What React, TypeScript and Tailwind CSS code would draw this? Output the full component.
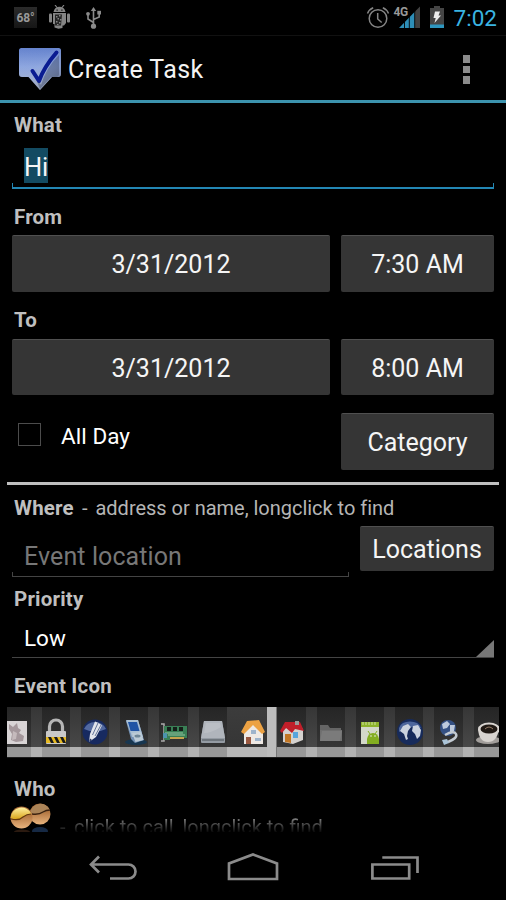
import type { ReactNode } from "react";

function StatusBar() {
  return (
    <div className="flex h-9 items-start justify-between border-b border-[#111] text-[#8a8a8a]">
      <div className="flex pt-[5px] pl-[14px]">
        <div className="mt-[2px] flex h-[21px] w-[23px] items-center justify-center bg-linear-to-b from-[#2b2b2b] to-[#161616] text-[12px] font-bold tracking-[-0.200px] text-[#999]">
          68°
        </div>
        <svg className="ml-3 h-6 w-[21px]" viewBox="0 0 21 24" fill="#858585">
          <path d="M6 0l2 2.5M15 0l-2 2.5" stroke="#858585" strokeWidth="1.2" />
          <path d="M4.500 7C5 3.500 7.500 1.800 10.500 1.800S16 3.500 16.500 7z" />
          <rect x="0" y="8.500" width="3" height="9" rx="1" />
          <rect x="18" y="8.500" width="3" height="9" rx="1" />
          <path d="M4 8h13v10l-2 2.500h-1.500V23l-4 .8-4-1.300V19H4z" />
          <path d="M6 9.500h7l-1 11H6z" fill="#262626" />
          <path d="M7 11h1.500v1.500H7zM10 10h1.500v1.500H10zM8.500 13H10v1.500H8.500zM11 14h1.500v1.500H11zM7 16h1.500v1.500H7zM10 17h1.500v1.500H10zM8 19h1.500v1H8z" />
          <path d="M7.500 4.500h1.200v1.200H7.500zM12.300 4.500h1.200v1.200h-1.200z" fill="#111" />
        </svg>
        <svg className="mt-[2px] ml-4 h-[22px] w-[15px]" viewBox="0 0 15 22" fill="none" stroke="#8a8a8a" strokeWidth="1.600">
          <path d="M7.500 2v17M7.500 15.500L2 12V7M7.500 12.500L13.200 10V6" />
          <path d="M4.800 4L7.500 0l2.700 4z" fill="#8a8a8a" stroke="none" />
          <circle cx="7.500" cy="19.200" r="2.600" fill="#8a8a8a" stroke="none" />
          <circle cx="2" cy="6.800" r="1.900" fill="#8a8a8a" stroke="none" />
          <path d="M11.300 3.800H15v3.700h-3.700z" fill="#8a8a8a" stroke="none" />
        </svg>
      </div>
      <div className="flex pt-[6px] pr-[9px]">
        <svg className="h-[23px] w-6" viewBox="0 0 24 23" fill="none" stroke="#858585" strokeWidth="1.500">
          <circle cx="12" cy="12.500" r="8.800" />
          <path d="M11.700 7v6l4 3.500" />
          <path d="M1.500 7.500Q3 3.500 7.200 1.800M22.500 7.500Q21 3.500 16.800 1.800" />
        </svg>
        <div className="relative ml-[3px] h-[23px] w-[28px]">
          <svg className="h-[23px] w-[28px]" viewBox="0 0 28 23">
            <path d="M6 22L22 5.500V22z" fill="#2e8fb8" />
            <path d="M22 5.500L27 0.500V22h-5z" fill="#424242" />
            <path d="M11.500 14v8M16.300 9v13M21.700 4v18" stroke="#000" strokeWidth="0.900" />
          </svg>
          <span className="absolute top-0 left-[1px] text-[12px] leading-[13px] font-bold tracking-[-0.500px] text-[#999]">4G</span>
        </div>
        <svg className="ml-[9px] h-[23px] w-[14px]" viewBox="0 0 14 23">
          <path d="M4 0h6v2h4v20H0V2h4z" fill="#454545" />
          <path d="M0 18.500h14V22H0z" fill="#2e96bf" />
          <path d="M5 5.500h5L8.500 9.500H11L4.500 17l1.200-5H3.500z" fill="#eee" />
        </svg>
        <span className="ml-[10px] pt-[1px] text-[22.500px] leading-[23px] text-[#3ab4e2]">7:02</span>
      </div>
    </div>
  );
}

function ActionBar() {
  return (
    <div className="flex h-[67px] items-start border-b-[3px] border-[#3c93ae] pl-[19px]">
      <svg className="mt-3 h-[43px] w-[42px]" viewBox="0 0 42 43">
        <defs>
          <linearGradient id="bubble" x1="0" y1="0" x2="0" y2="1">
            <stop offset="0" stopColor="#5878c8" />
            <stop offset="0.450" stopColor="#86a0dc" />
            <stop offset="1" stopColor="#a9b2c6" />
          </linearGradient>
          <linearGradient id="gloss" x1="0" y1="0" x2="1" y2="1">
            <stop offset="0.400" stopColor="#d9e4ff" stopOpacity="0.100" />
            <stop offset="1" stopColor="#333c55" stopOpacity="0.650" />
          </linearGradient>
        </defs>
        <path d="M2.500 0h37q2.500 0 2.500 2.500v23.500q0 3-3 3h-6L21 42 9.500 29H3q-3 0-3-3V2.500Q0 0 2.500 0z" fill="url(#bubble)" />
        <path d="M2.500 0h37q2.500 0 2.500 2.500v23.500q0 3-3 3h-6L21 42 9.500 29H3q-3 0-3-3V2.500Q0 0 2.500 0z" fill="url(#gloss)" />
        <path d="M15 26l7 11q5-17 18-30v19q0 3-3 3h-5L21 41z" fill="#26304d" opacity="0.350" />
        <path d="M13.500 23l6.500 10Q25 19 37.500 4.500" fill="none" stroke="#0a1c91" strokeWidth="4" strokeLinecap="round" strokeLinejoin="round" />
      </svg>
      <h1 className="ml-[7px] pt-[14px] text-[25px] leading-10 tracking-[0.400px] text-[#f3f3f3]">Create Task</h1>
      <div className="mt-[19px] mr-[36px] ml-auto flex flex-col gap-[3px]">
        <i className="h-[7.500px] w-[7.500px] bg-[#8b8b8b]" />
        <i className="h-[7.500px] w-[7.500px] bg-[#8b8b8b]" />
        <i className="h-[7.500px] w-[7.500px] bg-[#8b8b8b]" />
      </div>
    </div>
  );
}

function Label({ children, className }: { children: ReactNode; className: string }) {
  return <div className={"pl-[14px] text-[20.500px] font-bold tracking-[0.200px] text-[#bfbfbf] " + className}>{children}</div>;
}

function Button({ children, className }: { children: ReactNode; className: string }) {
  return (
    <button className={"rounded-[2px] border-t border-[#505050] bg-[#353535] pt-[2px] text-[25px] text-[#f5f5f5] " + className}>
      {children}
    </button>
  );
}

const eventIcons: ReactNode[] = [
  <>
    <rect x="2" y="3" width="20" height="23" fill="#d8d4d5" />
    <path d="M4 6l4 3 4-4 1 5 3 2-2 3 5 3-1 5-7 1-5-2 1-6-3-5z" fill="#a4979b" />
    <path d="M8 13l4 2-1 6-4 1z" fill="#c5babc" />
  </>,
  <>
    <path d="M5.500 14V8.500a6.500 6.500 0 0113 0V14" fill="none" stroke="#b5b5b5" strokeWidth="3.200" />
    <rect x="2" y="13" width="20" height="13" rx="1" fill="#c9c9c9" />
    <path d="M2 19h20v6H2z" fill="#e6b923" />
    <path d="M4 19h3l3 6H7zM10 19h3l3 6h-3zM16 19h3l3 6h-3z" fill="#191919" />
  </>,
  <>
    <circle cx="12" cy="14" r="12.500" fill="#172a60" />
    <path d="M1 11a11.500 10 0 0122 0Q12 16 1 11z" fill="#52699f" />
    <path d="M7 16L12 3.500l3.500 1.500 3.500 2.500L13 19l-7 5z" fill="#e2e5ed" />
    <path d="M9.500 17L15 5M12 18l6-11" stroke="#52658d" strokeWidth="0.900" />
    <path d="M6 24l1-3.500 2 1.500z" fill="#26355f" />
  </>,
  <>
    <ellipse cx="13" cy="24" rx="11" ry="3" fill="#173650" />
    <path d="M3 3l12-1 6 20-9 3-4-4z" fill="#7391b5" />
    <path d="M3 2h12l5 17H9z" fill="#a9bfd3" />
    <path d="M5 4h9l2.500 9H7.500z" fill="#2054a5" />
    <path d="M9 15l9-1 2.500 8-8 2z" fill="#bccbd6" />
    <ellipse cx="14.500" cy="18" rx="3" ry="1.500" fill="#6f8798" />
  </>,
  <>
    <path d="M-1 6h3v17h-3" fill="none" stroke="#aaa" strokeWidth="1.500" />
    <path d="M2 8h23v12H8v2H2z" fill="#397f55" />
    <path d="M5 9h4v4H5zM11 9h4v4h-4zM17 9h4v4h-4z" fill="#151e19" />
    <path d="M3 15h18M6 17h17" stroke="#94c6a0" />
    <path d="M8 19h14v2H8z" fill="#c4a44e" />
    <path d="M1 15h4v5H1z" fill="#4c93ad" />
  </>,
  <>
    <path d="M3 3h18l3 17v4q0 1-1 1H1q-1 0-1-1v-4z" fill="#949ba3" />
    <path d="M3 3h18l3 17H0z" fill="#b0b5bc" />
    <path d="M1 22h22" stroke="#636a71" strokeWidth="1.500" />
    <path d="M5 5h14l1 4Q10 15 3 15z" fill="#c1c5ca" opacity="0.600" />
  </>,
  <>
    <path d="M3 12v14h19V12l-9-8z" fill="#eee9e4" />
    <path d="M0 14L6 3l12-1 6 12-3 2-9-9-9 9z" fill="#eca243" />
    <path d="M10 12h5v4h-5zM14 20h6v3h-6z" fill="#9eb4cc" />
    <path d="M5 19h5v7H5z" fill="#9a5840" />
  </>,
  <>
    <path d="M3 12v12l10 2 10-4V11l-9-7z" fill="#d5d2cf" />
    <path d="M0 13L5 4l15 0 4 9-9-2-3 4-6-5-4 5z" fill="#c01f2a" />
    <path d="M15 3h4v4h-4z" fill="#999" />
    <path d="M5 16h6v9l-6-1z" fill="#c37725" />
    <path d="M13 14h5v6h-5z" fill="#56a5de" />
  </>,
  <>
    <path d="M1 7h8l2 3h11v3H1z" fill="#656565" />
    <path d="M1 12h22v11H1z" fill="#6f6f6f" />
    <path d="M3 13h20l-2 10H1z" fill="#7b7b7b" />
  </>,
  <>
    <rect x="3" y="4" width="18" height="22" fill="#d3d8c9" />
    <path d="M3 4h18v5H3z" fill="#8db32b" />
    <path d="M5 4v3M8 4v3M11 4v3M14 4v3M17 4v3" stroke="#e1edc0" strokeWidth="0.800" />
    <path d="M9 21q1-6 6-6t6 6v5H9z" fill="#83ae21" />
    <path d="M10 13l2 3M19 13l-2 3" stroke="#83ae21" />
    <circle cx="13" cy="18" r="0.800" fill="#eee" />
    <circle cx="17" cy="18" r="0.800" fill="#eee" />
  </>,
  <>
    <circle cx="12" cy="14" r="13" fill="#172b5b" />
    <path d="M1 10a11.500 9 0 0122 0Q12 7 1 14z" fill="#4d669c" />
    <path d="M5 8l5-2 3 3-3 4-1 5 1 3-2 1-2-6-4-3z" fill="#cbd3df" />
    <path d="M15 8l5-1 3 5-1 6-3 3-2-5-3-3z" fill="#cbd3df" />
  </>,
  <>
    <circle cx="11" cy="10" r="8" fill="#345083" />
    <path d="M5 6l5-3 3 3-3 4-4 1zM13 7l5 0-1 6-4 2z" fill="#bdcadd" />
    <path d="M8 17q9-5 11-1t-8 8" fill="none" stroke="#c3cad2" strokeWidth="2.500" />
    <path d="M5 22l5-1 2 4-5 2z" fill="#abc4d8" />
  </>,
  <>
    <ellipse cx="12" cy="22" rx="12" ry="4" fill="#a29e9b" />
    <path d="M2 11q1 13 10 13t11-13z" fill="#d7d3cf" />
    <ellipse cx="13" cy="11" rx="11" ry="6.500" fill="#d8d4d0" />
    <ellipse cx="13" cy="11" rx="8.500" ry="4.500" fill="#201914" />
    <path d="M9 11q4-4 8 0" stroke="#937b68" fill="none" />
  </>,
];

function IconTile({ icon }: { icon: ReactNode }) {
  return (
    <div className="relative flex w-[39.270px] shrink-0 flex-col">
      <div className="flex h-10 justify-between bg-linear-to-b from-[#252525] to-[#363636]">
        <span className="w-[5px] bg-linear-to-b from-[#363636] to-[#484848]" />
        <span className="w-[6px] bg-linear-to-b from-[#363636] to-[#484848]" />
      </div>
      <div className="h-[10px] border-r-[6px] border-l-[5px] border-[#b2b2b2] bg-[#989898]" />
      <svg className="absolute top-[11px] left-[7.500px] h-7 w-6 overflow-visible" viewBox="0 0 24 28">{icon}</svg>
    </div>
  );
}

/* The selected tile is pulled left and closed by a light bar that overlaps its neighbour. */
function SelectedTile({ icon }: { icon: ReactNode }) {
  return (
    <div className="relative z-10 mr-[5.270px] -ml-[6px] flex w-10 shrink-0 flex-col">
      <div className="h-10 bg-linear-to-b from-[#3c3c3c] to-[#363636]" />
      <div className="h-[10px] bg-[#b8b8b8]" />
      <svg className="absolute top-[11px] left-[14px] h-7 w-6 overflow-visible" viewBox="0 0 24 28">{icon}</svg>
      <span className="absolute top-0 -right-[10px] h-[50px] w-[10px] border-r border-[#777] bg-[#bdbdbd]" />
    </div>
  );
}

function IconGallery() {
  return (
    <div className="mx-[7px] flex h-[51px] overflow-hidden border-b border-[#1d1d1d]">
      <div className="-ml-[9.600px] flex">
        {eventIcons.map((icon, i) => (i === 6 ? <SelectedTile key={i} icon={icon} /> : <IconTile key={i} icon={icon} />))}
      </div>
    </div>
  );
}

function People() {
  return (
    <svg className="ml-[9px] h-[30px] w-[44px] shrink-0" viewBox="0 0 44 30">
      <defs>
        <linearGradient id="hair" x1="0" y1="0" x2="0" y2="1">
          <stop offset="0" stopColor="#fff0a0" />
          <stop offset="1" stopColor="#d9a318" />
        </linearGradient>
        <linearGradient id="face" x1="0" y1="0" x2="0" y2="1">
          <stop offset="0.300" stopColor="#a86a36" />
          <stop offset="1" stopColor="#e8b47e" />
        </linearGradient>
      </defs>
      <ellipse cx="31" cy="29" rx="8" ry="4" fill="#162944" />
      <ellipse cx="13" cy="30" rx="8" ry="2.500" fill="#2b1a10" />
      <circle cx="31" cy="12" r="10.500" fill="url(#face)" />
      <path d="M21 11a10.500 10.500 0 0120-3q-4 1-7 3-5 3-13 0z" fill="#ab8458" />
      <path d="M23 12q7 1 11-2 3-2 7-2" fill="none" stroke="#3b210f" strokeWidth="1.300" />
      <circle cx="12.500" cy="15.500" r="11" fill="url(#face)" />
      <path d="M1.500 16a11 11 0 0121-4q-5 0-8 3-5 4-13 1z" fill="url(#hair)" />
      <path d="M2 17q8 2 12-2 4-3 8-3" fill="none" stroke="#65390d" strokeWidth="1.100" />
    </svg>
  );
}

function NavBar() {
  return (
    <nav className="flex h-[68px] items-start pt-5 pl-[87px]">
      <svg className="h-8 w-[51px]" viewBox="0 0 51 32" fill="none" stroke="#8b8b8b" strokeWidth="2.700">
        <path d="M12 4.500L4 12.500l8 8M4 12.500h37.500a6.900 6.900 0 010 14H23" />
      </svg>
      <svg className="ml-[88px] h-8 w-[54px]" viewBox="0 0 54 32" fill="none" stroke="#8b8b8b" strokeWidth="2.700">
        <path d="M3 27V11.500L27 2.500l24 9V27z" />
      </svg>
      <svg className="ml-[89px] h-8 w-[52px]" viewBox="0 0 52 32" fill="none" stroke="#8b8b8b" strokeWidth="2.700">
        <path d="M3.400 12.500h36.800v14H3.400zM13.300 5.500h35.200V21" />
      </svg>
    </nav>
  );
}

export default function App() {
  return (
    <div className="flex h-[900px] w-[506px] flex-col overflow-hidden bg-black font-['Roboto',sans-serif]">
      <StatusBar />
      <ActionBar />
      <Label className="h-11 leading-[44px]">What</Label>
      <div className="flex h-[42px] flex-col">
        <div className="flex flex-1 items-start pt-[1px] pl-6">
          <span className="h-[35px] w-6 bg-[#134b62] text-[25.500px] leading-[38px] tracking-[-0.300px] text-[#f5f5f5]">Hi</span>
        </div>
        <div className="mx-3 -mt-[6px] h-[6px] border-x border-b-2 border-[#2387b4]" />
      </div>
      <Label className="mt-[11px] h-[35px] leading-[34px]">From</Label>
      <div className="flex gap-[11px] pl-3">
        <Button className="h-[57px] w-[318px]">3/31/2012</Button>
        <Button className="h-[57px] w-[153px]">7:30 AM</Button>
      </div>
      <Label className="mt-[11px] h-9 leading-[34px]">To</Label>
      <div className="flex gap-[11px] pl-3">
        <Button className="h-[56px] w-[318px]">3/31/2012</Button>
        <Button className="h-[56px] w-[153px]">8:00 AM</Button>
      </div>
      <div className="mt-[18px] flex h-[69px] items-start pl-[18px]">
        <span className="mt-[10px] h-[23px] w-[23px] border border-[#4c4c4c]" />
        <span className="ml-5 text-[22.500px] leading-[46px] tracking-[0.050px] text-white">All Day</span>
        <Button className="mr-3 ml-auto h-[57px] w-[153px]">Category</Button>
      </div>
      <div className="mx-[7px] h-[3px] shrink-0 bg-[#bfbfbf]" />
      <div className="mt-[5px] flex h-9 leading-9">
        <Label className="w-[82px]">Where</Label>
        <span className="w-[13.500px] text-[20px] text-[#b5b5b5]">-</span>
        <span className="text-[20px] tracking-[-0.020px] text-[#b5b5b5]">address or name, longclick to find</span>
      </div>
      <div className="flex h-[51px] items-start pl-3">
        <div className="flex h-[51px] w-[337px] flex-col">
          <span className="h-[46px] shrink-0 pt-[1px] pl-3 text-[25px] leading-[59px] tracking-[0.100px] text-[#777]">Event location</span>
          <div className="h-[5px] border-x border-b border-[#444]" />
        </div>
        <Button className="ml-[11px] h-[45px] w-[134px]">Locations</Button>
      </div>
      <Label className="mt-1 h-9 leading-9">Priority</Label>
      <div className="mx-3 flex h-[41px] items-end justify-between border-b border-[#444] pl-3">
        <span className="text-[22.500px] leading-[38px] text-white">Low</span>
        <svg className="h-[17px] w-[18px]" viewBox="0 0 18 17">
          <path d="M18 0v17H0z" fill="#777" />
        </svg>
      </div>
      <Label className="mt-[11px] h-[38px] leading-[35px]">Event Icon</Label>
      <IconGallery />
      <Label className="mt-[15px] h-[29px] leading-[33px]">Who</Label>
      <div className="flex h-[30px] overflow-hidden">
        <People />
        <span className="bg-linear-to-b from-[#a0a0a0] from-45% to-[#0a0a0a] to-100% bg-clip-text pl-[7px] text-[20px] leading-[50px] text-transparent">
          <span className="inline-block w-[14px]">-</span>click to call, longclick to find
        </span>
      </div>
      <NavBar />
    </div>
  );
}
